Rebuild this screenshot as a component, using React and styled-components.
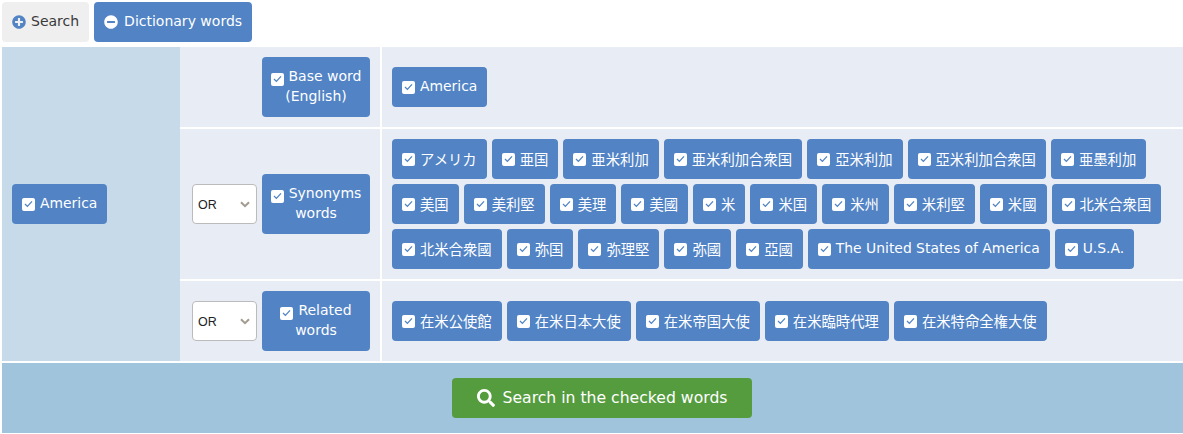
import React from "react";
import styled, { createGlobalStyle } from "styled-components";
import { FaPlusCircle, FaMinusCircle, FaSearch } from "react-icons/fa";

const Global = createGlobalStyle`
  html, body { margin: 0; padding: 0; background: #fff; }
  body { font-family: "DejaVu Sans", "Noto Sans CJK JP", sans-serif; font-size: 14px; }
`;

const Page = styled.div`
  padding: 2px 0 0 2px;
  width: 1181px;
`;
const Tabs = styled.div`
  display: flex;
  gap: 5px;
  margin-bottom: 5px;
`;
const Tab = styled.div`
  height: 40px;
  display: flex;
  align-items: center;
  gap: ${(p) => (p.$active ? "6px" : "5px")};
  padding: 0 10px;
  border-radius: 4px;
  background: ${(p) => (p.$active ? "#5183c5" : "#efefef")};
  color: ${(p) => (p.$active ? "#fff" : "#3a3a3a")};
  svg { width: 14px; height: 14px; color: ${(p) => (p.$active ? "#fff" : "#5183c5")}; }
`;
const Table = styled.div`
  display: grid;
  grid-template-columns: 178px 1fr;
  row-gap: 2px;
`;
const Root = styled.div`
  background: #c7daea;
  display: flex;
  align-items: center;
  padding: 10px;
`;
const Rows = styled.div`
  display: flex;
  flex-direction: column;
  gap: 2px;
`;
const Row = styled.div`
  display: grid;
  grid-template-columns: 200px 1fr;
  column-gap: 2px;
`;
const Left = styled.div`
  background: #e8ecf5;
  display: flex;
  align-items: center;
  justify-content: flex-end;
  gap: 5px;
  padding: 10px;
`;
const Right = styled.div`
  background: #e8ecf5;
  display: flex;
  flex-wrap: wrap;
  align-items: center;
  align-content: center;
  gap: 5px;
  padding: 10px;
`;
const Chip = styled.div`
  height: 40px;
  box-sizing: border-box;
  display: inline-flex;
  align-items: center;
  gap: 5px;
  padding: 0 10px;
  border-radius: 4px;
  background: #5183c5;
  color: #fff;
  white-space: nowrap;
  font-size: ${(p) => (p.$cjk ? "14.35px" : "13.9px")};
`;
const ChipText = styled.span`
  margin-bottom: 2px;
`;
const TabText = styled.span`
  margin-bottom: 2px;
`;
const Label = styled.div`
  width: 108px;
  height: 60px;
  box-sizing: border-box;
  padding: 9px 0 11px;
  border-radius: 4px;
  background: #5183c5;
  color: #fff;
  text-align: center;
  line-height: 20px;
`;
const Box = styled.span`
  display: inline-flex;
  align-items: center;
  justify-content: center;
  width: 13px;
  height: 13px;
  border-radius: 2px;
  background: #fff;
  flex: none;
  vertical-align: -2px;
  margin-right: ${(p) => (p.$inline ? "5px" : "0")};
  svg { display: block; }
`;
const SelectWrap = styled.div`
  position: relative;
  width: 65px;
  height: 40px;
  flex: none;
`;
const Select = styled.select`
  appearance: none;
  width: 100%;
  height: 100%;
  box-sizing: border-box;
  border: 1px solid #bbb;
  border-radius: 4px;
  background: #fff;
  color: #222;
  padding: 1px 0 0 5px;
  font: 12.5px "Liberation Sans", sans-serif;
`;
const Chevron = styled.svg`
  position: absolute;
  right: 7px;
  top: 17px;
  width: 10px;
  height: 7px;
  pointer-events: none;
`;
const Footer = styled.div`
  grid-column: 1 / -1;
  background: #a1c4dd;
  height: 70px;
  padding-left: 19px;
  display: flex;
  align-items: center;
  justify-content: center;
`;
const Go = styled.div`
  width: 300px;
  height: 40px;
  display: flex;
  align-items: center;
  justify-content: center;
  gap: 8px;
  border-radius: 4px;
  background: #559c3e;
  color: #fff;
  font-size: 15.65px;
  svg { width: 18px; height: 18px; }
`;

const Check = ({ inline }) => (
  <Box $inline={inline}>
    <svg width="9" height="8" viewBox="0 0 9 8" fill="none">
      <path d="M1 4l2.4 2.4L8 1.4" stroke="#5183c5" strokeWidth="1.3" />
    </svg>
  </Box>
);
const Word = ({ children, cjk }) => (
  <Chip $cjk={cjk}>
    <Check />
    <ChipText>{children}</ChipText>
  </Chip>
);
const Or = () => (
  <SelectWrap>
    <Select defaultValue="OR">
      <option>OR</option>
      <option>AND</option>
    </Select>
    <Chevron viewBox="0 0 10 7">
      <path d="M1 1.2l4 4 4-4" stroke="#a39b90" strokeWidth="2" fill="none" />
    </Chevron>
  </SelectWrap>
);

const synonyms = ["アメリカ","亜国","亜米利加","亜米利加合衆国","亞米利加","亞米利加合衆国","亜墨利加","美国","美利堅","美理","美國","米","米国","米州","米利堅","米國","北米合衆国","北米合衆國","弥国","弥理堅","弥國","亞國","The United States of America","U.S.A."];
const related = ["在米公使館","在米日本大使","在米帝国大使","在米臨時代理","在米特命全権大使"];
const isCjk = (w) => /[^\x00-\x7f]/.test(w);

export default function App() {
  return (
    <Page>
      <Global />
      <Tabs>
        <Tab><FaPlusCircle /><TabText>Search</TabText></Tab>
        <Tab $active><FaMinusCircle /><TabText>Dictionary words</TabText></Tab>
      </Tabs>
      <Table>
        <Root><Word>America</Word></Root>
        <Rows>
          <Row>
            <Left><Label><Check inline />Base word<br />(English)</Label></Left>
            <Right><Word>America</Word></Right>
          </Row>
          <Row>
            <Left><Or /><Label><Check inline />Synonyms<br />words</Label></Left>
            <Right>{synonyms.map((w) => <Word key={w} cjk={isCjk(w)}>{w}</Word>)}</Right>
          </Row>
          <Row>
            <Left><Or /><Label><Check inline />Related<br />words</Label></Left>
            <Right>{related.map((w) => <Word key={w} cjk>{w}</Word>)}</Right>
          </Row>
        </Rows>
        <Footer><Go><FaSearch /><ChipText>Search in the checked words</ChipText></Go></Footer>
      </Table>
    </Page>
  );
}
